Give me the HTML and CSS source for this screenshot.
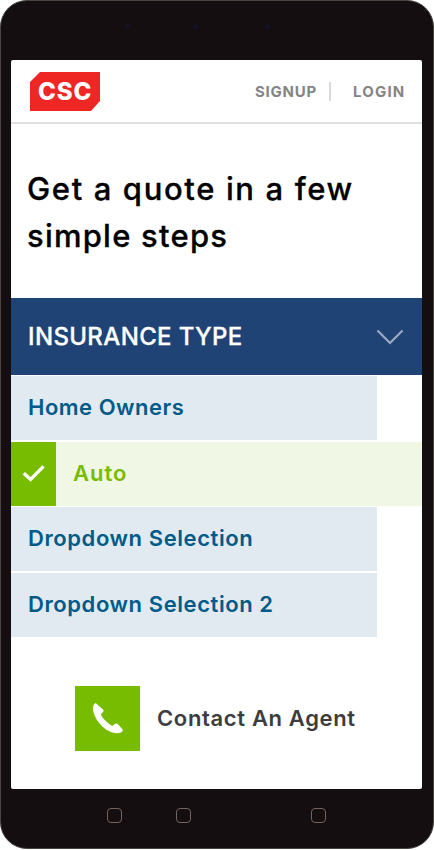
FILE: index.html
```html
<!DOCTYPE html>
<html lang="en">
<head>
<meta charset="utf-8">
<title>Get a quote</title>
<link rel="stylesheet" href="styles.css">
</head>
<body>
<div class="phone">
  <div class="sensors"><i></i><i></i><i></i></div>
  <main class="screen">
    <header class="header">
      <div class="logo"><span>CSC</span></div>
      <nav class="nav"><a class="signup">SIGNUP</a><i class="divider"></i><a class="login">LOGIN</a></nav>
    </header>
    <h1 class="title"><span class="line-one">Get a quote in a few</span><br><span class="line-two">simple steps</span></h1>
    <div class="select"><span>INSURANCE TYPE</span>
      <svg width="28" height="16" viewBox="0 0 28 16"><path d="M1.5 1.5 14 14 26.5 1.5" fill="none" stroke="#98a9c3" stroke-width="2.2"/></svg>
    </div>
    <ul class="options">
      <li class="option"><span class="home">Home Owners</span></li>
      <li class="option selected">
        <div class="check"><svg width="24" height="20" viewBox="0 0 24 20"><path d="M1.8 9.2 8.6 15.5 21.5 2.3" fill="none" stroke="#fff" stroke-width="3.3"/></svg></div>
        <span class="auto">Auto</span>
      </li>
      <li class="option"><span class="drop">Dropdown Selection</span></li>
      <li class="option"><span class="drop">Dropdown Selection 2</span></li>
    </ul>
    <div class="contact">
      <div class="call"><svg width="32" height="32" viewBox="0 0 32 32"><path fill="#fff" d="M3.8.9C1.6 1.8.5 4.5 1 8 3.2 19.5 14 30.8 25 31.3c3 .1 5.3-1 6-3.2Q29 25.3 26.7 22.9Q24.8 20.9 23.2 21.8L20.3 24C15.7 21.3 11.3 17.3 8.7 12.6L11.4 9.6Q12.2 8.4 10.8 7.3Q6.6 4 3.8.9Z"/></svg></div>
      <span class="agent">Contact An Agent</span>
    </div>
  </main>
  <footer class="keys"><i></i><i></i><i></i></footer>
</div>
</body>
</html>
```

FILE: styles.css
```css
* { box-sizing: border-box; }
body { margin: 0; background: #fff; font-family: Inter, "Liberation Sans", sans-serif; font-weight: 500; overflow: hidden; }
.phone { width: 434px; height: 849px; background: #140e10; border: 1px solid #48443f; border-radius: 27px; padding: 0 11px 0 10px; display: flex; flex-direction: column; }
.sensors { height: 59px; flex: none; display: flex; padding: 23px 0 0 114px; gap: 63px; }
.sensors i { width: 5px; height: 5px; border-radius: 50%; background: #151129; }
.sensors i:last-child { margin-left: 4px; }
.screen { width: 411px; height: 729px; flex: none; background: #fff; border-radius: 2px; display: flex; flex-direction: column; }
.header { height: 64px; flex: none; border-bottom: 2px solid #e0e0e0; display: flex; justify-content: space-between; padding: 12px 17px 0 19px; }
.logo { width: 70px; height: 39px; background: #ee2725; clip-path: polygon(10px 0, 100% 0, 100% 29px, 61px 100%, 0 100%, 0 10px); color: #fff; font-weight: 800; font-size: 24px; line-height: 40px; letter-spacing: 0.9px; padding-left: 8px; }
.nav { display: flex; align-items: center; height: 39px; color: #858585; font-size: 15px; font-weight: 700; }
.signup { letter-spacing: 0.75px; }
.login { letter-spacing: 1.2px; margin-right: -0.5px; }
.divider { width: 2px; height: 19px; background: #dadada; margin: 0 22px 0 12px; }
.title { margin: 42px 0 0 16px; height: 132px; font-size: 31px; line-height: 46.5px; font-weight: 500; -webkit-text-stroke: 0.3px #000; color: #000; white-space: nowrap; }
.line-one { letter-spacing: 1.63px; }
.line-two { letter-spacing: 1.23px; }
.select { height: 77px; flex: none; background: #204375; color: #fff; display: flex; align-items: center; justify-content: space-between; padding: 0 18px 0 17px; font-size: 24px; letter-spacing: 0.35px; -webkit-text-stroke: 0.3px #fff; white-space: nowrap; }
.options { list-style: none; margin: 1px 0 0; padding: 0; display: flex; flex-direction: column; gap: 1.5px; }
.option { width: 366px; height: 64px; background: #e0eaf0; color: #005b88; display: flex; align-items: center; padding: 0 0 2px 17px; font-size: 22px; font-weight: 600; letter-spacing: 0.5px; white-space: nowrap; }
.drop { letter-spacing: 0.58px; }
.selected { width: 411px; background: #f0f7e5; color: #77bc00; padding: 0; }
.check { width: 45px; height: 64px; background: #78bc00; display: flex; align-items: center; justify-content: center; }
.auto { margin: 0 0 2px 17px; letter-spacing: 1px; }
.contact { margin: 49px 0 0 64px; display: flex; align-items: center; color: #3d3d3f; font-size: 22px; font-weight: 600; letter-spacing: 0.65px; white-space: nowrap; }
.call { width: 65px; height: 65px; background: #78bc00; display: flex; align-items: center; justify-content: center; margin-right: 17px; }
.keys { display: flex; padding: 19px 0 0 96px; }
.keys i { width: 15px; height: 15px; border: 1px solid #75635f; border-radius: 4px; margin-right: 54px; }
.keys i:nth-child(2) { margin-right: 120px; }
```
